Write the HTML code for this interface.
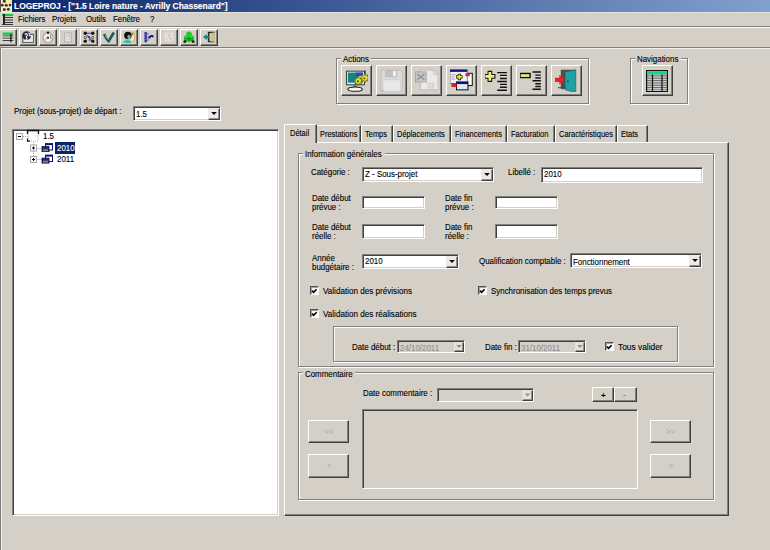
<!DOCTYPE html><html><head><meta charset="utf-8"><style>
html,body{margin:0;padding:0;}
body{width:770px;height:550px;position:relative;overflow:hidden;background:#D4D0C8;font-family:"Liberation Sans",sans-serif;font-size:9px;color:#000;}
.t{position:absolute;white-space:nowrap;line-height:10px;transform-origin:0 0;-webkit-text-stroke:0.12px currentColor;}
</style></head><body>
<div style="position:absolute;left:0px;top:0px;width:770px;height:12px;background:linear-gradient(90deg,#0A246A 0px,#A6CAF0 1020px);"></div>
<svg style="position:absolute;left:0;top:0" width="12" height="12"><rect x="0" y="0" width="12" height="12" fill="#F0F0D0"/><rect x="8" y="0" width="4" height="3" fill="#F4E890"/><rect x="0" y="0" width="1" height="12" fill="#605040"/><g fill="#4A3418"><circle cx="4.3" cy="1.2" r="1.5"/><circle cx="2.3" cy="5.2" r="1.4"/><circle cx="6.3" cy="5.3" r="1.5"/><circle cx="10" cy="5.1" r="1.4"/><circle cx="4.3" cy="9.5" r="1.5"/><circle cx="8.3" cy="9.3" r="1.5"/></g></svg>
<div class="t" style="left:14px;top:0.5px;transform:scaleX(0.99);color:#fff;font-weight:bold;font-size:8.5px;">LOGEPROJ - ["1.5 Loire nature - Avrilly Chassenard"]</div>
<svg style="position:absolute;left:2px;top:14px" width="11" height="11"><rect x="0" y="0" width="11" height="2" fill="#20c040"/><rect x="1" y="0" width="2" height="11" fill="#222"/><rect x="3" y="3" width="8" height="1" fill="#333"/><rect x="3" y="5.5" width="8" height="1" fill="#333"/><rect x="3" y="8" width="8" height="1" fill="#333"/><rect x="0" y="10" width="11" height="1" fill="#333"/></svg>
<div class="t" style="left:18px;top:14px;transform:scaleX(0.92);font-size:8.5px;">Fichiers</div>
<div class="t" style="left:52px;top:14px;transform:scaleX(0.92);font-size:8.5px;">Projets</div>
<div class="t" style="left:86px;top:14px;transform:scaleX(0.92);font-size:8.5px;">Outils</div>
<div class="t" style="left:113px;top:14px;transform:scaleX(0.92);font-size:8.5px;">Fenêtre</div>
<div class="t" style="left:150px;top:14px;transform:scaleX(0.92);font-size:8.5px;">?</div>
<div style="position:absolute;left:0px;top:12px;width:770px;height:1px;background:#E4E2DC;"></div>
<div style="position:absolute;left:0px;top:26px;width:770px;height:1px;background:#808080;"></div>
<div style="position:absolute;left:0px;top:27px;width:770px;height:1px;background:#fff;"></div>
<div style="position:absolute;left:-1px;top:29px;width:18px;height:17px;background:#D4D0C8;border-top:1px solid #fff;border-left:1px solid #fff;border-right:1px solid #404040;border-bottom:1px solid #404040;box-sizing:border-box;box-shadow:inset -1px -1px 0 #808080;"></div>
<div style="position:absolute;left:19px;top:29px;width:18px;height:17px;background:#D4D0C8;border-top:1px solid #fff;border-left:1px solid #fff;border-right:1px solid #404040;border-bottom:1px solid #404040;box-sizing:border-box;box-shadow:inset -1px -1px 0 #808080;"></div>
<div style="position:absolute;left:39px;top:29px;width:18px;height:17px;background:#D4D0C8;border-top:1px solid #fff;border-left:1px solid #fff;border-right:1px solid #404040;border-bottom:1px solid #404040;box-sizing:border-box;box-shadow:inset -1px -1px 0 #808080;"></div>
<div style="position:absolute;left:59px;top:29px;width:18px;height:17px;background:#D4D0C8;border-top:1px solid #fff;border-left:1px solid #fff;border-right:1px solid #404040;border-bottom:1px solid #404040;box-sizing:border-box;box-shadow:inset -1px -1px 0 #808080;"></div>
<div style="position:absolute;left:80px;top:29px;width:18px;height:17px;background:#D4D0C8;border-top:1px solid #fff;border-left:1px solid #fff;border-right:1px solid #404040;border-bottom:1px solid #404040;box-sizing:border-box;box-shadow:inset -1px -1px 0 #808080;"></div>
<div style="position:absolute;left:100px;top:29px;width:18px;height:17px;background:#D4D0C8;border-top:1px solid #fff;border-left:1px solid #fff;border-right:1px solid #404040;border-bottom:1px solid #404040;box-sizing:border-box;box-shadow:inset -1px -1px 0 #808080;"></div>
<div style="position:absolute;left:120px;top:29px;width:18px;height:17px;background:#D4D0C8;border-top:1px solid #fff;border-left:1px solid #fff;border-right:1px solid #404040;border-bottom:1px solid #404040;box-sizing:border-box;box-shadow:inset -1px -1px 0 #808080;"></div>
<div style="position:absolute;left:140px;top:29px;width:18px;height:17px;background:#D4D0C8;border-top:1px solid #fff;border-left:1px solid #fff;border-right:1px solid #404040;border-bottom:1px solid #404040;box-sizing:border-box;box-shadow:inset -1px -1px 0 #808080;"></div>
<div style="position:absolute;left:160px;top:29px;width:18px;height:17px;background:#D4D0C8;border-top:1px solid #fff;border-left:1px solid #fff;border-right:1px solid #404040;border-bottom:1px solid #404040;box-sizing:border-box;box-shadow:inset -1px -1px 0 #808080;"></div>
<div style="position:absolute;left:180px;top:29px;width:18px;height:17px;background:#D4D0C8;border-top:1px solid #fff;border-left:1px solid #fff;border-right:1px solid #404040;border-bottom:1px solid #404040;box-sizing:border-box;box-shadow:inset -1px -1px 0 #808080;"></div>
<div style="position:absolute;left:200px;top:29px;width:18px;height:17px;background:#D4D0C8;border-top:1px solid #fff;border-left:1px solid #fff;border-right:1px solid #404040;border-bottom:1px solid #404040;box-sizing:border-box;box-shadow:inset -1px -1px 0 #808080;"></div>
<svg style="position:absolute;left:2px;top:31px" width="12" height="12" viewBox="0 0 16 16"><rect x="1" y="2" width="14" height="3" fill="#10D040"/><rect x="1" y="6" width="14" height="1.2" fill="#303030"/><rect x="1" y="7.5" width="14" height="1.2" fill="#F0C8D8"/><rect x="1" y="9" width="14" height="1.2" fill="#303030"/><rect x="1" y="10.5" width="14" height="1.2" fill="#E0E8F0"/><rect x="1" y="12" width="14" height="1.2" fill="#303030"/><rect x="11" y="4" width="1.6" height="11" fill="#101010"/></svg>
<svg style="position:absolute;left:22px;top:31px" width="12" height="12" viewBox="0 0 16 16"><rect x="1" y="4.5" width="14.5" height="11" fill="#E8E8E8" stroke="#606060" stroke-width="1.6"/><circle cx="6.2" cy="6.2" r="5.8" fill="#282838"/><path d="M3.5 4.5l2.5-1l1.5 2l-2 2.5l1.5 2.5l-2 2M8 2.5l2.5 1.5l-0.5 2l2 0.5" stroke="#F0F0F8" stroke-width="1.5" fill="none"/></svg>
<svg style="position:absolute;left:42px;top:31px" width="12" height="12" viewBox="0 0 16 16"><circle cx="8" cy="8.7" r="6.6" fill="#F8F0F2" stroke="#A89898" stroke-width="1.4"/><circle cx="8" cy="2.2" r="1.6" fill="#101010"/><path d="M4 12l3-4" stroke="#E8C0C8" stroke-width="2.5"/><circle cx="8" cy="9" r="1.4" fill="#202020"/><path d="M11 5l1 6" stroke="#707070" stroke-width="1.2"/></svg>
<svg style="position:absolute;left:62px;top:31px" width="12" height="12" viewBox="0 0 16 16"><rect x="3.5" y="2.5" width="9" height="12" fill="#E4E4E4" stroke="#B0B0B0" stroke-width="1.2"/><rect x="5.5" y="5" width="5" height="6" fill="#F8F8F8" stroke="#C0C0C0"/><path d="M7 6.5h2v2h-1v1" stroke="#A0A0A0" stroke-width="0.9" fill="none"/></svg>
<svg style="position:absolute;left:83px;top:31px" width="12" height="12" viewBox="0 0 16 16"><path d="M3 3H13M8 8L11 12M5 6l3 2" stroke="#4040D0" stroke-width="1.6"/><g><circle cx="3" cy="3" r="2.3" fill="#101030"/><circle cx="13" cy="3" r="2.3" fill="#102010"/><circle cx="3" cy="8.5" r="2.1" fill="#707020"/><circle cx="3" cy="8.5" r="0.9" fill="#E0E0A0"/><circle cx="13" cy="8.5" r="2.1" fill="#707020"/><circle cx="13" cy="8.5" r="0.9" fill="#E0E0A0"/><circle cx="8" cy="8" r="1.5" fill="#3030A0"/><circle cx="3" cy="13.5" r="2.3" fill="#201810"/><circle cx="13" cy="13.5" r="2.3" fill="#201810"/><circle cx="9" cy="12" r="1.4" fill="#5050D0"/></g></svg>
<svg style="position:absolute;left:103px;top:31px" width="12" height="12" viewBox="0 0 16 16"><path d="M1.5 4Q4 11 7.5 13.5L14.5 2" stroke="#205858" stroke-width="3.6" fill="none"/><path d="M3 6Q5 10 7.5 11.5" stroke="#A0D0D0" stroke-width="1" fill="none"/></svg>
<svg style="position:absolute;left:123px;top:31px" width="12" height="12" viewBox="0 0 16 16"><rect x="9" y="2.5" width="6.5" height="11" fill="#F0E8B0" stroke="#B0A050" stroke-width="0.8"/><circle cx="12.5" cy="4" r="1.2" fill="#806020"/><circle cx="6.5" cy="6" r="5" fill="#101010"/><ellipse cx="8" cy="8" rx="2.2" ry="3" fill="#80A8A0"/><path d="M0.5 16Q1.5 11.5 6 12Q10 12 11 16Z" fill="#30C0B0"/></svg>
<svg style="position:absolute;left:143px;top:31px" width="12" height="12" viewBox="0 0 16 16"><rect x="2" y="1.5" width="3.2" height="13.5" fill="#2A2A90"/><path d="M2 4.5h3.2M2 8h3.2M2 11.5h3.2" stroke="#9090E0" stroke-width="0.8"/><path d="M5 4h3M5 8h3M5 12h3" stroke="#6060C0" stroke-width="1.6"/><path d="M8 10Q10 5 14 7.5" stroke="#101070" stroke-width="2.4" fill="none"/></svg>
<svg style="position:absolute;left:163px;top:31px" width="12" height="12" viewBox="0 0 16 16"><rect x="2" y="2" width="12" height="12" fill="#E8DCD4"/><circle cx="8" cy="6" r="1.5" fill="#C8C0B0"/><circle cx="10" cy="10" r="1.3" fill="#B8C0A8"/><circle cx="5" cy="11" r="1" fill="#D0C0B8"/></svg>
<svg style="position:absolute;left:183px;top:31px" width="12" height="12" viewBox="0 0 16 16"><ellipse cx="8" cy="9.5" rx="6.8" ry="5" fill="#10B818"/><circle cx="8" cy="4.5" r="3.8" fill="#20C828"/><circle cx="4.5" cy="7" r="2" fill="#30D838"/><circle cx="11.5" cy="7" r="2" fill="#30D838"/><circle cx="2.5" cy="14" r="2" fill="#103810"/><circle cx="13.5" cy="14" r="2" fill="#103810"/><path d="M6 10h4" stroke="#086008" stroke-width="1"/></svg>
<svg style="position:absolute;left:203px;top:31px" width="12" height="12" viewBox="0 0 16 16"><rect x="6.5" y="1" width="11" height="14" fill="#302818"/><path d="M8.5 3L16 1.8V14.5L8.5 13.5Z" fill="#C8C090"/><path d="M10 4v8" stroke="#E8E0B8" stroke-width="1"/><path d="M0 8L5 4V6.5H9V9.5H5V12Z" fill="#108888"/></svg>
<div style="position:absolute;left:0px;top:47px;width:770px;height:1px;background:#808080;"></div>
<div style="position:absolute;left:0px;top:47px;width:1px;height:503px;background:#808080;"></div>
<div style="position:absolute;left:1px;top:48px;width:769px;height:1px;background:#F2F0EC;"></div>
<div style="position:absolute;left:1px;top:48px;width:1px;height:502px;background:#F2F0EC;"></div>
<div style="position:absolute;left:337px;top:59px;width:253px;height:46px;border:1px solid #fff;box-sizing:border-box;"></div>
<div style="position:absolute;left:336px;top:58px;width:253px;height:46px;border:1px solid #808080;box-sizing:border-box;"></div>
<div style="position:absolute;left:341px;top:58px;width:30px;height:3px;background:#D4D0C8;"></div>
<div class="t" style="left:343px;top:54px;transform:scaleX(0.88);">Actions</div>
<div style="position:absolute;left:341px;top:65px;width:31px;height:31px;background:#D4D0C8;border-top:1px solid #fff;border-left:1px solid #fff;border-right:1px solid #404040;border-bottom:1px solid #404040;box-sizing:border-box;box-shadow:inset -1px -1px 0 #808080;"></div>
<div style="position:absolute;left:376px;top:65px;width:31px;height:31px;background:#D4D0C8;border-top:1px solid #fff;border-left:1px solid #fff;border-right:1px solid #404040;border-bottom:1px solid #404040;box-sizing:border-box;box-shadow:inset -1px -1px 0 #808080;"></div>
<div style="position:absolute;left:411px;top:65px;width:31px;height:31px;background:#D4D0C8;border-top:1px solid #fff;border-left:1px solid #fff;border-right:1px solid #404040;border-bottom:1px solid #404040;box-sizing:border-box;box-shadow:inset -1px -1px 0 #808080;"></div>
<div style="position:absolute;left:446px;top:65px;width:31px;height:31px;background:#D4D0C8;border-top:1px solid #fff;border-left:1px solid #fff;border-right:1px solid #404040;border-bottom:1px solid #404040;box-sizing:border-box;box-shadow:inset -1px -1px 0 #808080;"></div>
<div style="position:absolute;left:481px;top:65px;width:31px;height:31px;background:#D4D0C8;border-top:1px solid #fff;border-left:1px solid #fff;border-right:1px solid #404040;border-bottom:1px solid #404040;box-sizing:border-box;box-shadow:inset -1px -1px 0 #808080;"></div>
<div style="position:absolute;left:516px;top:65px;width:31px;height:31px;background:#D4D0C8;border-top:1px solid #fff;border-left:1px solid #fff;border-right:1px solid #404040;border-bottom:1px solid #404040;box-sizing:border-box;box-shadow:inset -1px -1px 0 #808080;"></div>
<div style="position:absolute;left:551px;top:65px;width:31px;height:31px;background:#D4D0C8;border-top:1px solid #fff;border-left:1px solid #fff;border-right:1px solid #404040;border-bottom:1px solid #404040;box-sizing:border-box;box-shadow:inset -1px -1px 0 #808080;"></div>
<svg style="position:absolute;left:345px;top:69px" width="23" height="23" viewBox="0 0 32 32"><rect x="2" y="3" width="25" height="19" fill="#E4E4EC" stroke="#303030" stroke-width="1.3"/><rect x="4" y="5" width="21" height="14" fill="#108888"/><rect x="15" y="5" width="10" height="5" fill="#3848A8"/><rect x="19" y="10" width="6" height="5" fill="#F0F0F0"/><rect x="12" y="22" width="4" height="3" fill="#707070"/><ellipse cx="14" cy="28" rx="10" ry="3" fill="#F4F4F4" stroke="#202020" stroke-width="1.6"/><path d="M28 2v9" stroke="#202020" stroke-width="1.4"/><g fill="#E0E030" stroke="#505010" stroke-width="0.9"><path d="M12 17l3-2l-1-3l3 1l2-3l1 3l3-1l-1 3l3 2l-3 1l1 3l-3-1l-1 3l-2-3l-3 1l1-3z"/><path d="M21 13l3-2l-1-3l3 1l2-3l1 3l3-1l-1 3l3 2l-3 1l1 3l-3-1l-1 3l-2-3l-3 1l1-3z"/></g><circle cx="18" cy="17" r="1.3" fill="#404010"/><circle cx="27" cy="13" r="1.3" fill="#404010"/></svg>
<svg style="position:absolute;left:380px;top:69px" width="23" height="23" viewBox="0 0 32 32"><path d="M1.5 1.5H28L31 4.5V32H1.5Z" fill="#DCDCDC" stroke="#B8B8B8"/><rect x="7" y="1.5" width="17" height="10" fill="#C0C0C0"/><rect x="18" y="3" width="4" height="7" fill="#F4F4F4"/><rect x="4" y="15" width="25" height="16" fill="#E8E8E8" stroke="#C8C8C8"/><path d="M3 30h2" stroke="#909090"/></svg>
<svg style="position:absolute;left:415px;top:69px" width="23" height="23" viewBox="0 0 32 32"><path d="M7.5 1.5H26L32 7.5V29H7.5Z" fill="#EAEAEA" stroke="#B8B8B8" stroke-width="1.2"/><path d="M26 1.5V7.5H32" fill="none" stroke="#B8B8B8"/><rect x="0.5" y="4" width="15" height="14" fill="#C8C8C8" stroke="#A0A0A0" stroke-width="1.2"/><path d="M3 7l10 8M13 7l-10 8" stroke="#909090" stroke-width="2"/><path d="M16 20h12M16 23h12M16 26h12M20 18v10M24 18v10" stroke="#C8C8C8"/></svg>
<svg style="position:absolute;left:450px;top:69px" width="23" height="23" viewBox="0 0 32 32"><rect x="21" y="6" width="10" height="17" fill="#fff" stroke="#101010" stroke-width="1.4"/><rect x="0" y="1" width="24" height="19" fill="#F0F0F8" stroke="#606060"/><rect x="0" y="1" width="24" height="3" fill="#101080"/><path d="M2 8h6M2 11h4M2 14h5" stroke="#8080C0"/><rect x="9" y="18" width="16" height="11" fill="#E0ECF4" stroke="#101010" stroke-width="1.4"/><rect x="9" y="18" width="16" height="3" fill="#101080"/><rect x="21.5" y="6" width="6" height="4" fill="#E02020"/><rect x="2" y="19.5" width="7" height="5.5" fill="#E02020"/><path d="M13 6.5v9M8.5 11h9" stroke="#202000" stroke-width="4.5"/><path d="M13 7.5v7M9.5 11h7" stroke="#F0F020" stroke-width="2.2"/></svg>
<svg style="position:absolute;left:485px;top:69px" width="23" height="23" viewBox="0 0 32 32"><path d="M6.8 2.5v15.5M-1 10.3h15.5" stroke="#101010" stroke-width="6.4"/><path d="M6.8 4v12.5M0.5 10.3h12.5" stroke="#F0F080" stroke-width="3.8"/><path d="M17 5h13.5M20.8 8.9h9.7M20.8 13.2h9.7M17 17.5h13.5M20.8 21.4h9.7M20.8 25.3h9.7M17 29.6h13.5" stroke="#101010" stroke-width="2"/></svg>
<svg style="position:absolute;left:520px;top:69px" width="23" height="23" viewBox="0 0 32 32"><rect x="-1" y="5.3" width="16" height="7.7" rx="1" fill="#101010"/><rect x="1" y="7.3" width="12" height="3.7" fill="#F0F080"/><path d="M17.4 4.2h11.6M21.3 8.5h7.7M21.3 12.4h7.7M17.4 16.3h11.6M21.3 20.6h7.7M21.3 24.4h7.7M17.4 28.2h11.6" stroke="#101010" stroke-width="2"/></svg>
<svg style="position:absolute;left:555px;top:69px" width="23" height="23" viewBox="0 0 32 32"><rect x="8" y="1" width="20" height="27" fill="#505050"/><path d="M14 4L29 1V33L14 29Z" fill="#20A0A0" stroke="#106060" stroke-width="0.8"/><path d="M-2 12H6V8L13 15L6 22V18H-2Z" fill="#F02020"/><path d="M4 26H12" stroke="#404040" stroke-width="1.3"/><circle cx="18" cy="17" r="1" fill="#103030"/></svg>
<div style="position:absolute;left:631px;top:59px;width:58px;height:46px;border:1px solid #fff;box-sizing:border-box;"></div>
<div style="position:absolute;left:630px;top:58px;width:58px;height:46px;border:1px solid #808080;box-sizing:border-box;"></div>
<div style="position:absolute;left:635px;top:58px;width:46px;height:3px;background:#D4D0C8;"></div>
<div class="t" style="left:637px;top:54px;transform:scaleX(0.88);">Navigations</div>
<div style="position:absolute;left:642px;top:65px;width:31px;height:31px;background:#D4D0C8;border-top:1px solid #fff;border-left:1px solid #fff;border-right:1px solid #404040;border-bottom:1px solid #404040;box-sizing:border-box;box-shadow:inset -1px -1px 0 #808080;"></div>
<svg style="position:absolute;left:646px;top:70px" width="22" height="22" viewBox="0 0 22 22"><rect x="0.6" y="0.6" width="20.8" height="20.8" fill="#F4F4F4" stroke="#101010" stroke-width="1.2"/><rect x="1.2" y="1.2" width="19.6" height="3.2" fill="#10D880"/><path d="M1 5.20h20M1 6.95h20M1 8.70h20M1 10.45h20M1 12.20h20M1 13.95h20M1 15.70h20M1 17.45h20M1 19.20h20" stroke="#383838" stroke-width="0.75"/><path d="M6.5 4.5v16.5M16 4.5v16.5" stroke="#101010" stroke-width="1.2"/></svg>
<div class="t" style="left:14px;top:106px;transform:scaleX(0.88);">Projet (sous-projet) de départ :</div>
<div style="position:absolute;left:133px;top:106px;width:88px;height:15px;background:#fff;border-top:1px solid #808080;border-left:1px solid #808080;border-right:1px solid #fff;border-bottom:1px solid #fff;box-sizing:border-box;box-shadow:inset 1px 1px 0 #404040, inset -1px -1px 0 #D4D0C8;"></div>
<div class="t" style="left:136px;top:109px;transform:scaleX(0.88);color:#000;">1.5</div>
<div style="position:absolute;left:208px;top:108px;width:12px;height:12px;background:#ECEAE4;border-top:1px solid #ECEAE4;border-left:1px solid #ECEAE4;border-right:1px solid #404040;border-bottom:1px solid #404040;box-sizing:border-box;box-shadow:inset -1px -1px 0 #909090;"><svg width="12" height="12" style="position:absolute;left:-1px;top:-1px"><path d="M3.2 4.0h5.6l-2.8 3z" fill="#000"/></svg></div>
<div style="position:absolute;left:12px;top:129px;width:267px;height:387px;background:#fff;border-top:1px solid #808080;border-left:1px solid #808080;border-right:1px solid #fff;border-bottom:1px solid #fff;box-sizing:border-box;box-shadow:inset 1px 1px 0 #404040, inset -1px -1px 0 #D4D0C8;"></div>
<svg style="position:absolute;left:0px;top:0px" width="80" height="170" viewBox="0 0 80 170">
<g stroke="#A0A0A0" stroke-width="1" stroke-dasharray="1 1">
<path d="M23 136.5H27.5"/><path d="M33.5 142V145M33.5 151V156.5M33.5 162.5V163"/><path d="M36.5 148.5H42"/><path d="M36.5 159.5H42"/>
</g>
<rect x="16.5" y="133.5" width="6" height="6" fill="#fff" stroke="#A8A8A8"/><path d="M18 136.5h3" stroke="#000"/>
<rect x="30.5" y="145" width="6" height="6" fill="#fff" stroke="#A8A8A8"/><path d="M32 148h3M33.5 146.5v3" stroke="#000"/>
<rect x="30.5" y="156.5" width="6" height="6" fill="#fff" stroke="#A8A8A8"/><path d="M32 159.5h3M33.5 158v3" stroke="#000"/>
<rect x="28" y="131" width="10" height="10" fill="#fff" stroke="#B0B0B0" stroke-dasharray="1 1"/>
<path d="M27.5 134V130.5H38.5V134" stroke="#101010" stroke-width="1.3" fill="none"/><path d="M27.5 138.5V141.2H30" stroke="#101010" stroke-width="1.2" fill="none"/>
<g transform="translate(0,0)">
<rect x="45.5" y="143.8" width="7" height="6.2" fill="#fff" stroke="#101070" stroke-width="1"/><rect x="45" y="143.3" width="8" height="1.8" fill="#101070"/>
<rect x="42" y="146.6" width="7" height="5" fill="#1A2A90" stroke="#101030" stroke-width="0.8"/><rect x="43" y="149.2" width="5" height="2" fill="#8A8050"/>
</g>
<g transform="translate(0,11.5)">
<rect x="45.5" y="143.8" width="7" height="6.2" fill="#fff" stroke="#101070" stroke-width="1"/><rect x="45" y="143.3" width="8" height="1.8" fill="#101070"/>
<rect x="42" y="146.6" width="7" height="5" fill="#1A2A90" stroke="#101030" stroke-width="0.8"/><rect x="43" y="149.2" width="5" height="2" fill="#8A8050"/>
</g>
</svg>
<div class="t" style="left:43px;top:131px;transform:scaleX(0.88);">1.5</div>
<div style="position:absolute;left:55px;top:142px;width:20px;height:12px;background:#0A246A;"></div>
<div class="t" style="left:57px;top:143px;transform:scaleX(0.88);color:#fff;">2010</div>
<div class="t" style="left:57px;top:154px;transform:scaleX(0.88);">2011</div>
<div style="position:absolute;left:284px;top:142px;width:445px;height:374px;border-top:1px solid #fff;border-left:1px solid #fff;border-right:1px solid #404040;border-bottom:1px solid #404040;box-sizing:border-box;box-shadow:inset -1px -1px 0 #808080;"></div>
<div style="position:absolute;left:316px;top:125px;width:45px;height:17px;background:#D4D0C8;border-top:1px solid #fff;border-left:1px solid #fff;border-right:1px solid #404040;box-sizing:border-box;box-shadow:inset -1px 0 0 #808080;"></div>
<div class="t" style="left:320px;top:129px;transform:scaleX(0.83);">Prestations</div>
<div style="position:absolute;left:361px;top:125px;width:32px;height:17px;background:#D4D0C8;border-top:1px solid #fff;border-left:1px solid #fff;border-right:1px solid #404040;box-sizing:border-box;box-shadow:inset -1px 0 0 #808080;"></div>
<div class="t" style="left:365px;top:129px;transform:scaleX(0.83);">Temps</div>
<div style="position:absolute;left:393px;top:125px;width:58px;height:17px;background:#D4D0C8;border-top:1px solid #fff;border-left:1px solid #fff;border-right:1px solid #404040;box-sizing:border-box;box-shadow:inset -1px 0 0 #808080;"></div>
<div class="t" style="left:397px;top:129px;transform:scaleX(0.83);">Déplacements</div>
<div style="position:absolute;left:451px;top:125px;width:56px;height:17px;background:#D4D0C8;border-top:1px solid #fff;border-left:1px solid #fff;border-right:1px solid #404040;box-sizing:border-box;box-shadow:inset -1px 0 0 #808080;"></div>
<div class="t" style="left:455px;top:129px;transform:scaleX(0.83);">Financements</div>
<div style="position:absolute;left:507px;top:125px;width:48px;height:17px;background:#D4D0C8;border-top:1px solid #fff;border-left:1px solid #fff;border-right:1px solid #404040;box-sizing:border-box;box-shadow:inset -1px 0 0 #808080;"></div>
<div class="t" style="left:511px;top:129px;transform:scaleX(0.83);">Facturation</div>
<div style="position:absolute;left:555px;top:125px;width:62px;height:17px;background:#D4D0C8;border-top:1px solid #fff;border-left:1px solid #fff;border-right:1px solid #404040;box-sizing:border-box;box-shadow:inset -1px 0 0 #808080;"></div>
<div class="t" style="left:559px;top:129px;transform:scaleX(0.83);">Caractéristiques</div>
<div style="position:absolute;left:617px;top:125px;width:31px;height:17px;background:#D4D0C8;border-top:1px solid #fff;border-left:1px solid #fff;border-right:1px solid #404040;box-sizing:border-box;box-shadow:inset -1px 0 0 #808080;"></div>
<div class="t" style="left:621px;top:129px;transform:scaleX(0.83);">Etats</div>
<div style="position:absolute;left:284px;top:124px;width:33px;height:19px;background:#D4D0C8;border-top:1px solid #fff;border-left:1px solid #fff;border-right:1px solid #404040;box-sizing:border-box;box-shadow:inset -1px 0 0 #808080;"></div>
<div class="t" style="left:290px;top:128px;transform:scaleX(0.83);">Détail</div>
<div style="position:absolute;left:299px;top:154px;width:416px;height:214px;border:1px solid #fff;box-sizing:border-box;"></div>
<div style="position:absolute;left:298px;top:153px;width:416px;height:214px;border:1px solid #808080;box-sizing:border-box;"></div>
<div style="position:absolute;left:303px;top:153px;width:82px;height:3px;background:#D4D0C8;"></div>
<div class="t" style="left:305px;top:149px;transform:scaleX(0.88);">Information générales</div>
<div class="t" style="left:311px;top:167px;transform:scaleX(0.88);">Catégorie :</div>
<div style="position:absolute;left:362px;top:167px;width:132px;height:15px;background:#fff;border-top:1px solid #808080;border-left:1px solid #808080;border-right:1px solid #fff;border-bottom:1px solid #fff;box-sizing:border-box;box-shadow:inset 1px 1px 0 #404040, inset -1px -1px 0 #D4D0C8;"></div>
<div class="t" style="left:365px;top:169px;transform:scaleX(0.88);color:#000;">Z - Sous-projet</div>
<div style="position:absolute;left:481px;top:169px;width:12px;height:12px;background:#ECEAE4;border-top:1px solid #ECEAE4;border-left:1px solid #ECEAE4;border-right:1px solid #404040;border-bottom:1px solid #404040;box-sizing:border-box;box-shadow:inset -1px -1px 0 #909090;"><svg width="12" height="12" style="position:absolute;left:-1px;top:-1px"><path d="M3.2 4.0h5.6l-2.8 3z" fill="#000"/></svg></div>
<div class="t" style="left:508px;top:167px;transform:scaleX(0.88);">Libellé :</div>
<div style="position:absolute;left:541px;top:167px;width:162px;height:16px;background:#fff;border-top:1px solid #808080;border-left:1px solid #808080;border-right:1px solid #fff;border-bottom:1px solid #fff;box-sizing:border-box;box-shadow:inset 1px 1px 0 #404040, inset -1px -1px 0 #D4D0C8;"></div>
<div class="t" style="left:544px;top:169px;transform:scaleX(0.88);">2010</div>
<div class="t" style="left:312px;top:194px;transform:scaleX(0.88);line-height:9px;">Date début<br>prévue :</div>
<div style="position:absolute;left:362px;top:196px;width:63px;height:13px;background:#fff;border-top:1px solid #808080;border-left:1px solid #808080;border-right:1px solid #fff;border-bottom:1px solid #fff;box-sizing:border-box;box-shadow:inset 1px 1px 0 #404040, inset -1px -1px 0 #D4D0C8;"></div>
<div class="t" style="left:445px;top:194px;transform:scaleX(0.88);line-height:9px;">Date fin<br>prévue :</div>
<div style="position:absolute;left:495px;top:196px;width:63px;height:13px;background:#fff;border-top:1px solid #808080;border-left:1px solid #808080;border-right:1px solid #fff;border-bottom:1px solid #fff;box-sizing:border-box;box-shadow:inset 1px 1px 0 #404040, inset -1px -1px 0 #D4D0C8;"></div>
<div class="t" style="left:312px;top:223px;transform:scaleX(0.88);line-height:9px;">Date début<br>réelle :</div>
<div style="position:absolute;left:362px;top:224px;width:63px;height:15px;background:#fff;border-top:1px solid #808080;border-left:1px solid #808080;border-right:1px solid #fff;border-bottom:1px solid #fff;box-sizing:border-box;box-shadow:inset 1px 1px 0 #404040, inset -1px -1px 0 #D4D0C8;"></div>
<div class="t" style="left:445px;top:223px;transform:scaleX(0.88);line-height:9px;">Date fin<br>réelle :</div>
<div style="position:absolute;left:495px;top:224px;width:63px;height:15px;background:#fff;border-top:1px solid #808080;border-left:1px solid #808080;border-right:1px solid #fff;border-bottom:1px solid #fff;box-sizing:border-box;box-shadow:inset 1px 1px 0 #404040, inset -1px -1px 0 #D4D0C8;"></div>
<div class="t" style="left:312px;top:254px;transform:scaleX(0.88);line-height:9px;">Année<br>budgétaire :</div>
<div style="position:absolute;left:362px;top:254px;width:97px;height:15px;background:#fff;border-top:1px solid #808080;border-left:1px solid #808080;border-right:1px solid #fff;border-bottom:1px solid #fff;box-sizing:border-box;box-shadow:inset 1px 1px 0 #404040, inset -1px -1px 0 #D4D0C8;"></div>
<div class="t" style="left:365px;top:256px;transform:scaleX(0.88);color:#000;">2010</div>
<div style="position:absolute;left:446px;top:256px;width:12px;height:12px;background:#ECEAE4;border-top:1px solid #ECEAE4;border-left:1px solid #ECEAE4;border-right:1px solid #404040;border-bottom:1px solid #404040;box-sizing:border-box;box-shadow:inset -1px -1px 0 #909090;"><svg width="12" height="12" style="position:absolute;left:-1px;top:-1px"><path d="M3.2 4.0h5.6l-2.8 3z" fill="#000"/></svg></div>
<div class="t" style="left:479px;top:256px;transform:scaleX(0.88);">Qualification comptable :</div>
<div style="position:absolute;left:570px;top:253px;width:132px;height:15px;background:#fff;border-top:1px solid #808080;border-left:1px solid #808080;border-right:1px solid #fff;border-bottom:1px solid #fff;box-sizing:border-box;box-shadow:inset 1px 1px 0 #404040, inset -1px -1px 0 #D4D0C8;"></div>
<div class="t" style="left:573px;top:257px;transform:scaleX(0.88);color:#000;">Fonctionnement</div>
<div style="position:absolute;left:689px;top:255px;width:12px;height:12px;background:#ECEAE4;border-top:1px solid #ECEAE4;border-left:1px solid #ECEAE4;border-right:1px solid #404040;border-bottom:1px solid #404040;box-sizing:border-box;box-shadow:inset -1px -1px 0 #909090;"><svg width="12" height="12" style="position:absolute;left:-1px;top:-1px"><path d="M3.2 4.0h5.6l-2.8 3z" fill="#000"/></svg></div>
<div style="position:absolute;left:310px;top:286px;width:9px;height:9px;background:#F6F6F2;border-top:1px solid #505050;border-left:1px solid #505050;border-right:1px solid #fff;border-bottom:1px solid #fff;box-sizing:border-box;box-shadow:inset 1px 1px 0 #A0A0A0;"><div style="position:absolute;left:-1px;top:0px;width:9px;height:9px"><svg width="9" height="9" style="position:absolute;left:0;top:0"><path d="M2 3.6L3.6 5.4L6.6 2.2" stroke="#000" stroke-width="1.6" fill="none"/></svg></div></div>
<div class="t" style="left:323px;top:286px;transform:scaleX(0.9);">Validation des prévisions</div>
<div style="position:absolute;left:478px;top:286px;width:9px;height:9px;background:#F6F6F2;border-top:1px solid #505050;border-left:1px solid #505050;border-right:1px solid #fff;border-bottom:1px solid #fff;box-sizing:border-box;box-shadow:inset 1px 1px 0 #A0A0A0;"><div style="position:absolute;left:-1px;top:0px;width:9px;height:9px"><svg width="9" height="9" style="position:absolute;left:0;top:0"><path d="M2 3.6L3.6 5.4L6.6 2.2" stroke="#000" stroke-width="1.6" fill="none"/></svg></div></div>
<div class="t" style="left:491px;top:286px;transform:scaleX(0.88);">Synchronisation des temps prevus</div>
<div style="position:absolute;left:310px;top:309px;width:9px;height:9px;background:#F6F6F2;border-top:1px solid #505050;border-left:1px solid #505050;border-right:1px solid #fff;border-bottom:1px solid #fff;box-sizing:border-box;box-shadow:inset 1px 1px 0 #A0A0A0;"><div style="position:absolute;left:-1px;top:0px;width:9px;height:9px"><svg width="9" height="9" style="position:absolute;left:0;top:0"><path d="M2 3.6L3.6 5.4L6.6 2.2" stroke="#000" stroke-width="1.6" fill="none"/></svg></div></div>
<div class="t" style="left:323px;top:309px;transform:scaleX(0.9);">Validation des réalisations</div>
<div style="position:absolute;left:334px;top:327px;width:345px;height:36px;border:1px solid #fff;box-sizing:border-box;"></div>
<div style="position:absolute;left:333px;top:326px;width:345px;height:36px;border:1px solid #808080;box-sizing:border-box;"></div>
<div class="t" style="left:352px;top:342px;transform:scaleX(0.88);">Date début :</div>
<div style="position:absolute;left:397px;top:340px;width:68px;height:13px;background:#D4D0C8;border-top:1px solid #808080;border-left:1px solid #808080;border-right:1px solid #fff;border-bottom:1px solid #fff;box-sizing:border-box;box-shadow:inset 1px 1px 0 #404040, inset -1px -1px 0 #D4D0C8;"></div>
<div class="t" style="left:400px;top:343px;transform:scaleX(0.88);color:#909090;">24/10/2011</div>
<div style="position:absolute;left:454px;top:342px;width:10px;height:10px;background:#E4E2DC;border-top:1px solid #E4E2DC;border-left:1px solid #E4E2DC;border-right:1px solid #404040;border-bottom:1px solid #404040;box-sizing:border-box;box-shadow:inset -1px -1px 0 #909090;"><svg width="10" height="10" style="position:absolute;left:-1px;top:-1px"><path d="M2.2 3.0h5.6l-2.8 3z" fill="#909090"/></svg></div>
<div class="t" style="left:485px;top:342px;transform:scaleX(0.88);">Date fin :</div>
<div style="position:absolute;left:518px;top:340px;width:68px;height:13px;background:#D4D0C8;border-top:1px solid #808080;border-left:1px solid #808080;border-right:1px solid #fff;border-bottom:1px solid #fff;box-sizing:border-box;box-shadow:inset 1px 1px 0 #404040, inset -1px -1px 0 #D4D0C8;"></div>
<div class="t" style="left:521px;top:343px;transform:scaleX(0.88);color:#909090;">31/10/2011</div>
<div style="position:absolute;left:575px;top:342px;width:10px;height:10px;background:#E4E2DC;border-top:1px solid #E4E2DC;border-left:1px solid #E4E2DC;border-right:1px solid #404040;border-bottom:1px solid #404040;box-sizing:border-box;box-shadow:inset -1px -1px 0 #909090;"><svg width="10" height="10" style="position:absolute;left:-1px;top:-1px"><path d="M2.2 3.0h5.6l-2.8 3z" fill="#909090"/></svg></div>
<div style="position:absolute;left:605px;top:342px;width:9px;height:9px;background:#F6F6F2;border-top:1px solid #505050;border-left:1px solid #505050;border-right:1px solid #fff;border-bottom:1px solid #fff;box-sizing:border-box;box-shadow:inset 1px 1px 0 #A0A0A0;"><div style="position:absolute;left:-1px;top:0px;width:9px;height:9px"><svg width="9" height="9" style="position:absolute;left:0;top:0"><path d="M2 3.6L3.6 5.4L6.6 2.2" stroke="#000" stroke-width="1.6" fill="none"/></svg></div></div>
<div class="t" style="left:618px;top:342px;transform:scaleX(0.93);">Tous valider</div>
<div style="position:absolute;left:299px;top:373px;width:416px;height:128px;border:1px solid #fff;box-sizing:border-box;"></div>
<div style="position:absolute;left:298px;top:372px;width:416px;height:128px;border:1px solid #808080;box-sizing:border-box;"></div>
<div style="position:absolute;left:303px;top:372px;width:52px;height:3px;background:#D4D0C8;"></div>
<div class="t" style="left:305px;top:369px;transform:scaleX(0.88);">Commentaire</div>
<div class="t" style="left:363px;top:388px;transform:scaleX(0.88);">Date commentaire :</div>
<div style="position:absolute;left:437px;top:388px;width:97px;height:14px;background:#D4D0C8;border-top:1px solid #808080;border-left:1px solid #808080;border-right:1px solid #fff;border-bottom:1px solid #fff;box-sizing:border-box;box-shadow:inset 1px 1px 0 #404040, inset -1px -1px 0 #D4D0C8;"></div>
<div style="position:absolute;left:522px;top:390px;width:11px;height:11px;background:#E4E2DC;border-top:1px solid #E4E2DC;border-left:1px solid #E4E2DC;border-right:1px solid #404040;border-bottom:1px solid #404040;box-sizing:border-box;box-shadow:inset -1px -1px 0 #909090;"><svg width="11" height="11" style="position:absolute;left:-1px;top:-1px"><path d="M2.7 3.5h5.6l-2.8 3z" fill="#909090"/></svg></div>
<div style="position:absolute;left:592px;top:387px;width:22px;height:15px;background:#D4D0C8;border-top:1px solid #fff;border-left:1px solid #fff;border-right:1px solid #404040;border-bottom:1px solid #404040;box-sizing:border-box;box-shadow:inset -1px -1px 0 #808080;"><div class="t" style="left:8px;top:2.5px;font-size:8px;font-weight:bold">+</div></div>
<div style="position:absolute;left:614px;top:387px;width:23px;height:15px;background:#D4D0C8;border-top:1px solid #fff;border-left:1px solid #fff;border-right:1px solid #404040;border-bottom:1px solid #404040;box-sizing:border-box;box-shadow:inset -1px -1px 0 #808080;"><div class="t" style="left:8px;top:2px;color:#808080">-</div></div>
<div style="position:absolute;left:362px;top:409px;width:276px;height:80px;background:#D4D0C8;border-top:1px solid #808080;border-left:1px solid #808080;border-right:1px solid #fff;border-bottom:1px solid #fff;box-sizing:border-box;box-shadow:inset 1px 1px 0 #404040, inset -1px -1px 0 #D4D0C8;"></div>
<div style="position:absolute;left:308px;top:420px;width:41px;height:23px;background:#D4D0C8;border-top:1px solid #fff;border-left:1px solid #fff;border-right:1px solid #404040;border-bottom:1px solid #404040;box-sizing:border-box;box-shadow:inset -1px -1px 0 #808080;"><div class="t" style="left:15px;top:6px;color:#A8A8A8;font-size:8px">&lt;&lt;</div></div>
<div style="position:absolute;left:308px;top:454px;width:41px;height:24px;background:#D4D0C8;border-top:1px solid #fff;border-left:1px solid #fff;border-right:1px solid #404040;border-bottom:1px solid #404040;box-sizing:border-box;box-shadow:inset -1px -1px 0 #808080;"><div class="t" style="left:18px;top:6px;color:#A8A8A8;font-size:8px">&lt;</div></div>
<div style="position:absolute;left:650px;top:420px;width:41px;height:23px;background:#D4D0C8;border-top:1px solid #fff;border-left:1px solid #fff;border-right:1px solid #404040;border-bottom:1px solid #404040;box-sizing:border-box;box-shadow:inset -1px -1px 0 #808080;"><div class="t" style="left:15px;top:6px;color:#A8A8A8;font-size:8px">&gt;&gt;</div></div>
<div style="position:absolute;left:650px;top:454px;width:41px;height:24px;background:#D4D0C8;border-top:1px solid #fff;border-left:1px solid #fff;border-right:1px solid #404040;border-bottom:1px solid #404040;box-sizing:border-box;box-shadow:inset -1px -1px 0 #808080;"><div class="t" style="left:18px;top:6px;color:#A8A8A8;font-size:8px">&gt;</div></div>
</body></html>
